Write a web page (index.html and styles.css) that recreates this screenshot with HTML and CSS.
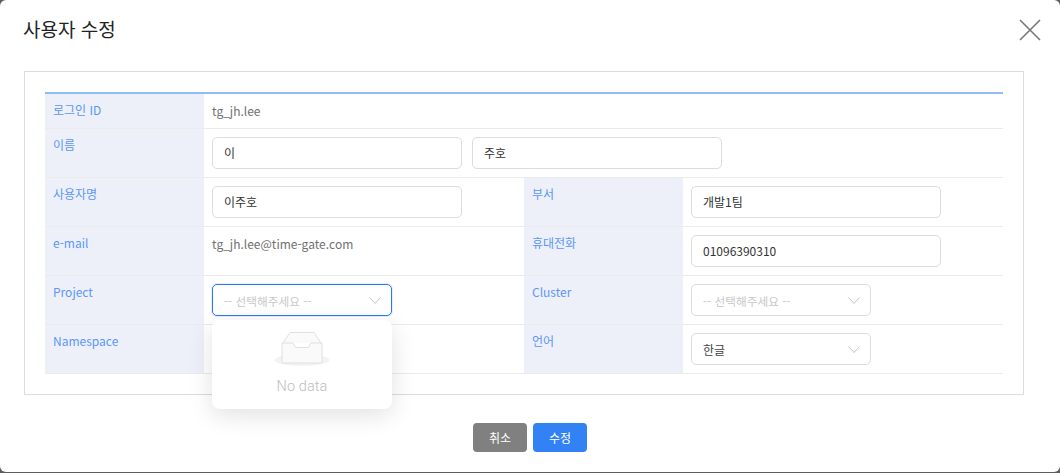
FILE: index.html
```html
<!DOCTYPE html>
<html lang="ko">
<head>
  <meta charset="UTF-8" />
  <title>사용자 수정</title>
  <link rel="stylesheet" href="styles.css">
</head>
<body>
  <main class="modal">
    <header class="modal-head">
      <h1>사용자 수정</h1>
      <button class="close-btn" type="button" aria-label="닫기">
        <svg viewBox="0 0 22 22" width="22" height="22" aria-hidden="true"><path d="M1 1l20 20M21 1L1 21"/></svg>
      </button>
    </header>

    <section class="panel">
      <div class="form-table">
        <div class="row row-short">
          <div class="label">로그인 ID</div>
          <div class="value wide plain">tg_jh.lee</div>
        </div>
        <div class="row">
          <div class="label">이름</div>
          <div class="value wide">
            <input class="field" type="text" value="이">
            <input class="field" type="text" value="주호">
          </div>
        </div>
        <div class="row">
          <div class="label">사용자명</div>
          <div class="value"><input class="field" type="text" value="이주호"></div>
          <div class="label">부서</div>
          <div class="value"><input class="field" type="text" value="개발1팀"></div>
        </div>
        <div class="row">
          <div class="label">e-mail</div>
          <div class="value plain">tg_jh.lee@time-gate.com</div>
          <div class="label">휴대전화</div>
          <div class="value"><input class="field" type="text" value="01096390310"></div>
        </div>
        <div class="row">
          <div class="label">Project</div>
          <div class="value">
            <div class="select-wrap">
              <div class="select focused">
                <span class="placeholder">-- 선택해주세요 --</span>
                <svg class="chevron" viewBox="0 0 12 7" width="12" height="7" aria-hidden="true"><path d="M.5.5L6 6.500 11.500.5"/></svg>
              </div>
              <div class="dropdown">
                <svg class="empty-icon" viewBox="0 0 56 36" width="56" height="36" aria-hidden="true">
                  <ellipse class="empty-shadow" cx="28" cy="29" rx="27.5" ry="6"/>
                  <path class="empty-back" d="M9 12L16 1.500h24L47 12"/>
                  <path class="empty-front" d="M8 12h10c1.500 0 2 .8 2.300 2 .3 1.500 1 2.500 2.700 2.500h10c1.700 0 2.400-1 2.700-2.500.3-1.200.8-2 2.300-2h10v18.500a1.500 1.500 0 0 1-1.500 1.500h-37A1.500 1.500 0 0 1 8 30.500z"/>
                </svg>
                <p class="empty-text">No data</p>
              </div>
            </div>
          </div>
          <div class="label">Cluster</div>
          <div class="value">
            <div class="select">
              <span class="placeholder">-- 선택해주세요 --</span>
              <svg class="chevron" viewBox="0 0 12 7" width="12" height="7" aria-hidden="true"><path d="M.5.5L6 6.500 11.500.5"/></svg>
            </div>
          </div>
        </div>
        <div class="row">
          <div class="label">Namespace</div>
          <div class="value"></div>
          <div class="label">언어</div>
          <div class="value">
            <div class="select">
              <span>한글</span>
              <svg class="chevron" viewBox="0 0 12 7" width="12" height="7" aria-hidden="true"><path d="M.5.5L6 6.500 11.500.5"/></svg>
            </div>
          </div>
        </div>
      </div>
    </section>

    <footer class="actions">
      <button class="btn btn-cancel" type="button">취소</button>
      <button class="btn btn-primary" type="button">수정</button>
    </footer>
  </main>
</body>
</html>
```

FILE: styles.css
```css
:root {
  --font: 'Noto Sans CJK KR', 'Noto Sans', sans-serif;
  --border: #dcdcdc;
  --line: #ebebeb;
  --label-bg: #edf0f8;
  --label-text: #5c97f8;
  --blue: #3282f6;
}

* {
  box-sizing: border-box;
}

html, body {
  height: 100%;
}

body {
  margin: 0;
  background: #5c5c5c;
  font-family: var(--font);
  font-size: 12px;
  color: #333;
  overflow: hidden;
}

.modal {
  height: 472px;
  background: #fff;
  border-radius: 6px;
  padding: 0 24px 0 24px;
  display: flex;
  flex-direction: column;
}

.modal-head {
  height: 71px;
  display: flex;
  justify-content: space-between;
  align-items: flex-start;
}

.modal-head h1 {
  margin: 15px 0 0 -1px;
  font-size: 19px;
  line-height: 28px;
  font-weight: 400;
  color: #222;
}

.close-btn {
  margin: 19px -5px 0 0;
  padding: 0;
  border: none;
  background: none;
  line-height: 0;
}

.close-btn path {
  fill: none;
  stroke: #777;
  stroke-width: 1.6;
}

.panel {
  width: 1000px;
  height: 324px;
  border: 1px solid var(--border);
  padding: 20px;
}

.form-table {
  width: 958px;
  border-top: 2px solid #90bbf6;
}

.row {
  display: grid;
  grid-template-columns: 159px 320px 159px 320px;
  height: 49px;
  border-bottom: 1px solid var(--line);
}

.row-short {
  height: 35px;
}

.label {
  background: var(--label-bg);
  color: var(--label-text);
  padding: 7px 8px 0;
  font-size: 12px;
  line-height: 18px;
}

.value {
  padding: 8px 8px 0;
  display: flex;
  gap: 10px;
  align-items: flex-start;
}

.value.wide {
  grid-column: span 3;
}

.value.plain {
  padding-top: 7px;
  color: #707070;
  line-height: 20px;
  font-size: 12px;
}

.field {
  width: 250px;
  height: 32px;
  padding: 0 11px 2px;
  border: 1px solid var(--border);
  border-radius: 5px;
  background: #fff;
  font-family: var(--font);
  font-size: 12px;
  color: #333;
  outline: none;
}

.select-wrap {
  position: relative;
  width: 180px;
}

.select {
  width: 180px;
  height: 32px;
  padding: 0 10px 0 11px;
  border: 1px solid var(--border);
  border-radius: 5px;
  background: #fff;
  display: flex;
  justify-content: space-between;
  align-items: center;
  color: #444;
}

.select.focused {
  border-color: #2a78f5;
  box-shadow: 0 0 0 1px #e6effd;
}

.placeholder {
  color: #c8c8c8;
  font-size: 11.7px;
}

.chevron path {
  fill: none;
  stroke: #c4c4c4;
  stroke-width: 1;
}

.dropdown {
  position: absolute;
  top: 36px;
  left: 0;
  width: 180px;
  height: 89px;
  padding-top: 11px;
  background: #fff;
  border-radius: 8px;
  box-shadow: 0 6px 24px rgba(0, 0, 0, 0.12);
  display: flex;
  flex-direction: column;
  align-items: center;
}

.empty-shadow {
  fill: #f3f3f3;
}

.empty-back {
  fill: #fafafa;
  stroke: #e0e0e0;
}

.empty-front {
  fill: #fafafa;
  stroke: #e0e0e0;
}

.empty-text {
  margin: 10px 0 0;
  font-family: Roboto, sans-serif;
  font-size: 14.5px;
  font-weight: 300;
  letter-spacing: 0.1px;
  line-height: 20px;
  color: #bdbdbd;
}

.actions {
  margin-top: 28px;
  display: flex;
  justify-content: center;
  gap: 6px;
}

.btn {
  width: 54px;
  height: 29px;
  border: none;
  border-radius: 4px;
  font-family: var(--font);
  font-size: 12px;
  color: #fff;
}

.btn-cancel {
  background: #808080;
}

.btn-primary {
  background: var(--blue);
}
```
